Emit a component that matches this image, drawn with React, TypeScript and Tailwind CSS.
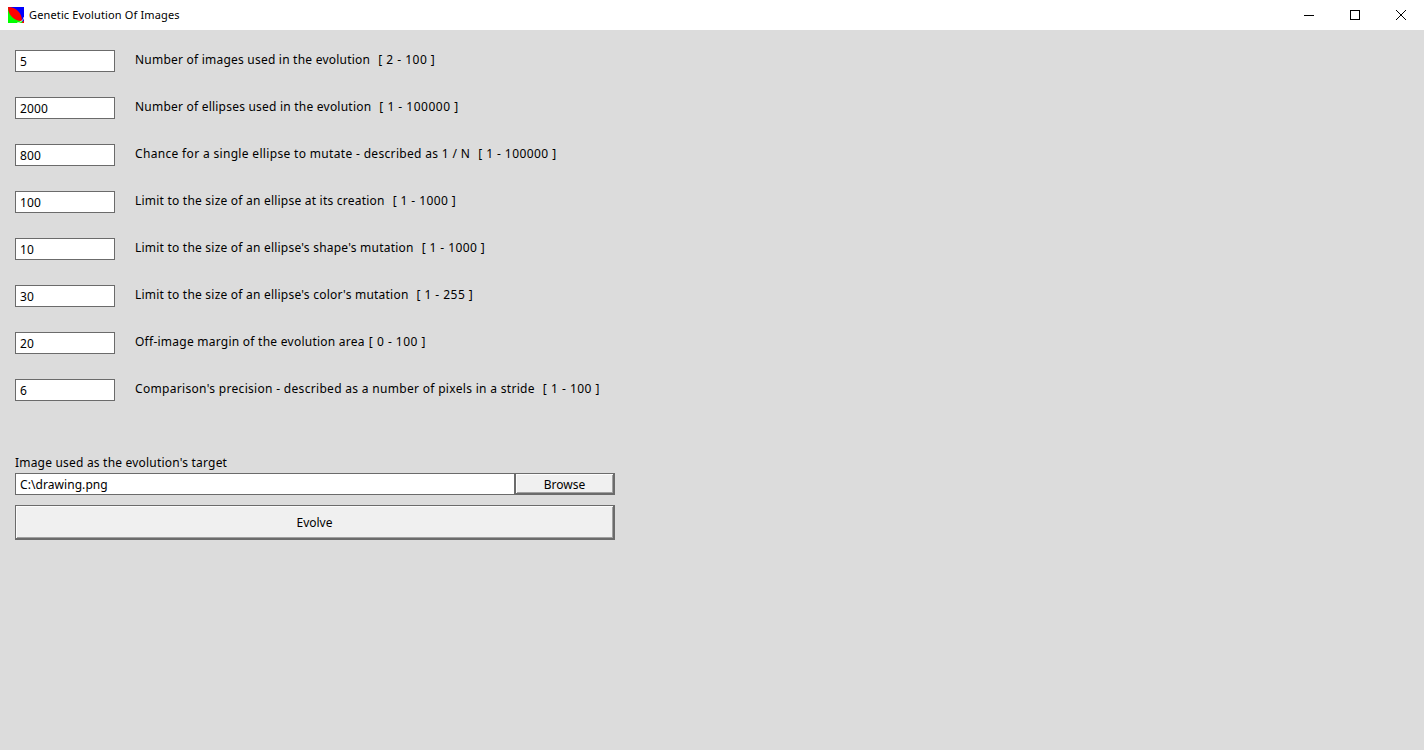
import React from "react";

const rows: { value: string; label: string; range: string; track: string; gap: string; rangeTrack: string }[] = [
  { value: "5", label: "Number of images used in the evolution", range: "[ 2 - 100 ]", track: "tracking-[0.22px]", gap: "ml-2", rangeTrack: "tracking-[0.5px]" },
  { value: "2000", label: "Number of ellipses used in the evolution", range: "[ 1 - 100000 ]", track: "tracking-[0.22px]", gap: "ml-2", rangeTrack: "tracking-[0.5px]" },
  { value: "800", label: "Chance for a single ellipse to mutate - described as 1 / N", range: "[ 1 - 100000 ]", track: "tracking-[0.33px]", gap: "ml-2", rangeTrack: "tracking-[0.43px]" },
  { value: "100", label: "Limit to the size of an ellipse at its creation", range: "[ 1 - 1000 ]", track: "tracking-[0.22px]", gap: "ml-2", rangeTrack: "tracking-[0.42px]" },
  { value: "10", label: "Limit to the size of an ellipse's shape's mutation", range: "[ 1 - 1000 ]", track: "tracking-[0.22px]", gap: "ml-2", rangeTrack: "tracking-[0.42px]" },
  { value: "30", label: "Limit to the size of an ellipse's color's mutation", range: "[ 1 - 255 ]", track: "tracking-[0.22px]", gap: "ml-2", rangeTrack: "tracking-[0.45px]" },
  { value: "20", label: "Off-image margin of the evolution area", range: "[ 0 - 100 ]", track: "tracking-[0.25px]", gap: "ml-1", rangeTrack: "tracking-[0.5px]" },
  { value: "6", label: "Comparison's precision - described as a number of pixels in a stride", range: "[ 1 - 100 ]", track: "tracking-[0.31px]", gap: "ml-2", rangeTrack: "tracking-[0.5px]" },
];

const buttonClass =
  "flex items-center justify-center border border-r-2 border-b-2 border-[#6b6b6b] bg-[#f0f0f0] pt-[2px] shadow-[inset_1px_1px_0_#fcfcfc,inset_-1px_-1px_0_#a0a0a0]";

export default function App() {
  return (
    <div className="flex h-[750px] w-[1424px] flex-col overflow-hidden bg-[#dcdcdc] font-['Noto_Sans',sans-serif] text-[12px] leading-[16px] text-black">
      <div className="flex h-[30px] items-center bg-white pl-2">
        <svg width="16" height="16" viewBox="0 0 16 16" className="mb-[1px] shrink-0">
          <rect width="16" height="16" fill="#00f" />
          <path d="M0 16L0 0L16 16Z" fill="#0f0" />
          <path d="M0 0C8 0 14 6 14 14C6 14 0 8 0 0Z" fill="#f00" />
          <path d="M16 10C15.5 13 13 15.500 9 16" stroke="#ffe" strokeWidth="0.8" fill="none" />
          <path d="M13.500 16L16 13.500V16Z" fill="#f00" />
        </svg>
        <span className="ml-[5px] text-[11px] tracking-[0.14px]">Genetic Evolution Of Images</span>
        <div className="ml-auto flex items-center">
          <div className="flex h-[30px] w-[46px] items-center justify-center">
            <svg width="10" height="10" viewBox="0 0 10 10"><path d="M0 5.5H10" stroke="#000" fill="none" /></svg>
          </div>
          <div className="flex h-[30px] w-[46px] items-center justify-center">
            <svg width="10" height="10" viewBox="0 0 10 10"><rect x="0.5" y="0.5" width="9" height="9" stroke="#000" fill="none" /></svg>
          </div>
          <div className="flex h-[30px] w-[46px] items-center justify-center">
            <svg width="10" height="10" viewBox="0 0 10 10"><path d="M0 0L10 10M10 0L0 10" stroke="#000" fill="none" /></svg>
          </div>
        </div>
      </div>
      <div className="flex flex-col pl-[15px] pt-5">
        <div className="flex flex-col gap-[25px]">
          {rows.map((r) => (
            <div key={r.label} className="flex h-[22px] items-start">
              <div className="flex h-[22px] w-[100px] items-center border border-[#6b6b6b] bg-white pl-1 pt-[1px] tracking-[0.1px]">{r.value}</div>
              <div className={`ml-5 whitespace-pre pt-[1px] leading-[18px] ${r.track}`}>{r.label}</div>
              <div className={`whitespace-pre pt-[1px] leading-[18px] ${r.rangeTrack} ${r.gap}`}>{r.range}</div>
            </div>
          ))}
        </div>
        <div className="mt-[53px] h-[19px] leading-[17px] tracking-[0.2px]">Image used as the evolution's target</div>
        <div className="flex h-[22px] w-[600px]">
          <div className="flex w-[500px] items-center border border-[#6b6b6b] bg-white pl-1 pt-[1px] tracking-[0.07px]">C:\drawing.png</div>
          <div className={`w-[100px] ${buttonClass}`}>Browse</div>
        </div>
        <div className={`mt-[10px] h-[35px] w-[600px] ${buttonClass}`}>Evolve</div>
      </div>
    </div>
  );
}
